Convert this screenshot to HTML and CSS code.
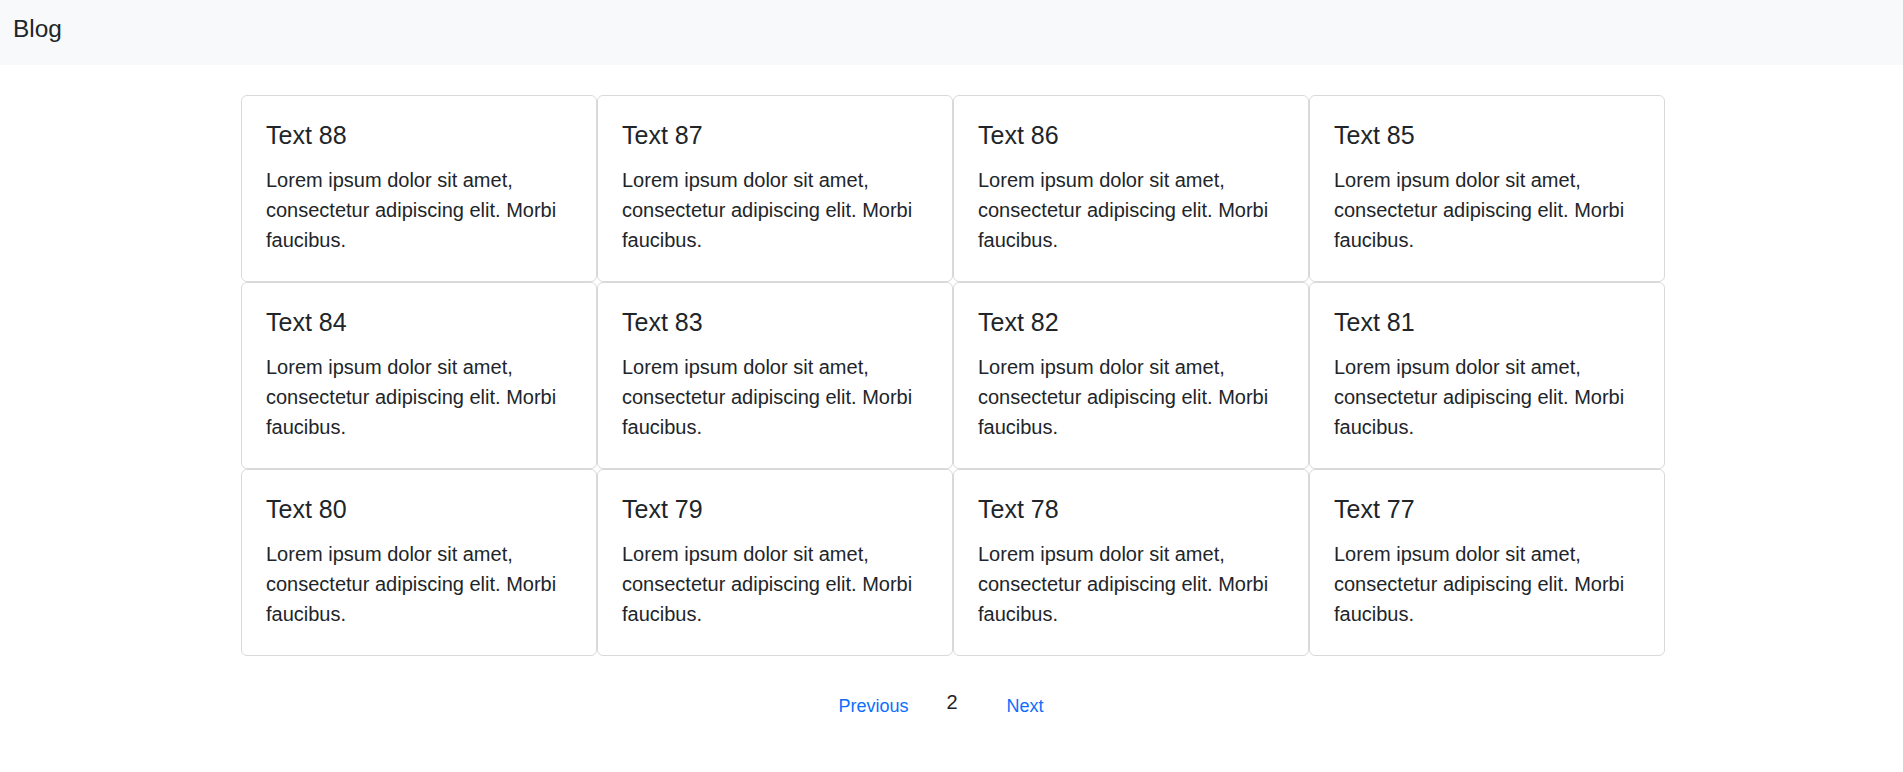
FILE: index.html
```html
<!DOCTYPE html>
<html lang="en">
<head>
<meta charset="utf-8">
<title>Blog</title>
<link rel="stylesheet" href="styles.css">
</head>
<body>
<header class="navbar"><span class="brand">Blog</span></header>
<main class="wrap">
  <div class="grid">
    <div class="card"><h5 class="card-title">Text 88</h5><p class="card-text">Lorem ipsum dolor sit amet, consectetur adipiscing elit. Morbi faucibus.</p></div>
    <div class="card"><h5 class="card-title">Text 87</h5><p class="card-text">Lorem ipsum dolor sit amet, consectetur adipiscing elit. Morbi faucibus.</p></div>
    <div class="card"><h5 class="card-title">Text 86</h5><p class="card-text">Lorem ipsum dolor sit amet, consectetur adipiscing elit. Morbi faucibus.</p></div>
    <div class="card"><h5 class="card-title">Text 85</h5><p class="card-text">Lorem ipsum dolor sit amet, consectetur adipiscing elit. Morbi faucibus.</p></div>
    <div class="card"><h5 class="card-title">Text 84</h5><p class="card-text">Lorem ipsum dolor sit amet, consectetur adipiscing elit. Morbi faucibus.</p></div>
    <div class="card"><h5 class="card-title">Text 83</h5><p class="card-text">Lorem ipsum dolor sit amet, consectetur adipiscing elit. Morbi faucibus.</p></div>
    <div class="card"><h5 class="card-title">Text 82</h5><p class="card-text">Lorem ipsum dolor sit amet, consectetur adipiscing elit. Morbi faucibus.</p></div>
    <div class="card"><h5 class="card-title">Text 81</h5><p class="card-text">Lorem ipsum dolor sit amet, consectetur adipiscing elit. Morbi faucibus.</p></div>
    <div class="card"><h5 class="card-title">Text 80</h5><p class="card-text">Lorem ipsum dolor sit amet, consectetur adipiscing elit. Morbi faucibus.</p></div>
    <div class="card"><h5 class="card-title">Text 79</h5><p class="card-text">Lorem ipsum dolor sit amet, consectetur adipiscing elit. Morbi faucibus.</p></div>
    <div class="card"><h5 class="card-title">Text 78</h5><p class="card-text">Lorem ipsum dolor sit amet, consectetur adipiscing elit. Morbi faucibus.</p></div>
    <div class="card"><h5 class="card-title">Text 77</h5><p class="card-text">Lorem ipsum dolor sit amet, consectetur adipiscing elit. Morbi faucibus.</p></div>
  </div>
  <nav class="pager">
    <a class="page-link" href="#">Previous</a>
    <span class="page-current">2</span>
    <a class="page-link next" href="#">Next</a>
  </nav>
</main>
</body>
</html>
```
FILE: styles.css
```css
html, body {
  margin: 0;
  padding: 0;
}
body {
  font-family: "Liberation Sans", Arial, sans-serif;
  color: #212529;
  background: #fff;
}
.navbar {
  height: 65px;
  box-sizing: border-box;
  background: #f8f9fa;
  padding: 14px 0 0 13px;
}
.brand {
  font-size: 24.4px;
  line-height: 1.2;
  display: block;
}
.wrap {
  padding: 30px 0 0 3px;
}
.grid {
  width: 1424px;
  margin: 0 auto;
  display: grid;
  grid-template-columns: repeat(4, 1fr);
}
.card {
  border: 1px solid rgba(0, 0, 0, 0.15);
  border-radius: 6px;
  padding: 24px 24px 26px;
  box-sizing: border-box;
  height: 187px;
}
.card-title {
  margin: 0 0 15px;
  font-size: 25px;
  font-weight: 400;
  line-height: 30px;
}
.card-text {
  margin: 0;
  font-size: 20px;
  line-height: 30px;
}
.pager {
  display: flex;
  justify-content: center;
  align-items: flex-start;
  margin-top: 31px;
  padding-right: 24px;
}
.page-link {
  color: #0d6efd;
  text-decoration: none;
  font-size: 18px;
  line-height: 27px;
  padding: 5.5px 12px 0;
}
.page-current {
  font-size: 20px;
  line-height: 30px;
  margin: 0 37px 0 26px;
}
```
